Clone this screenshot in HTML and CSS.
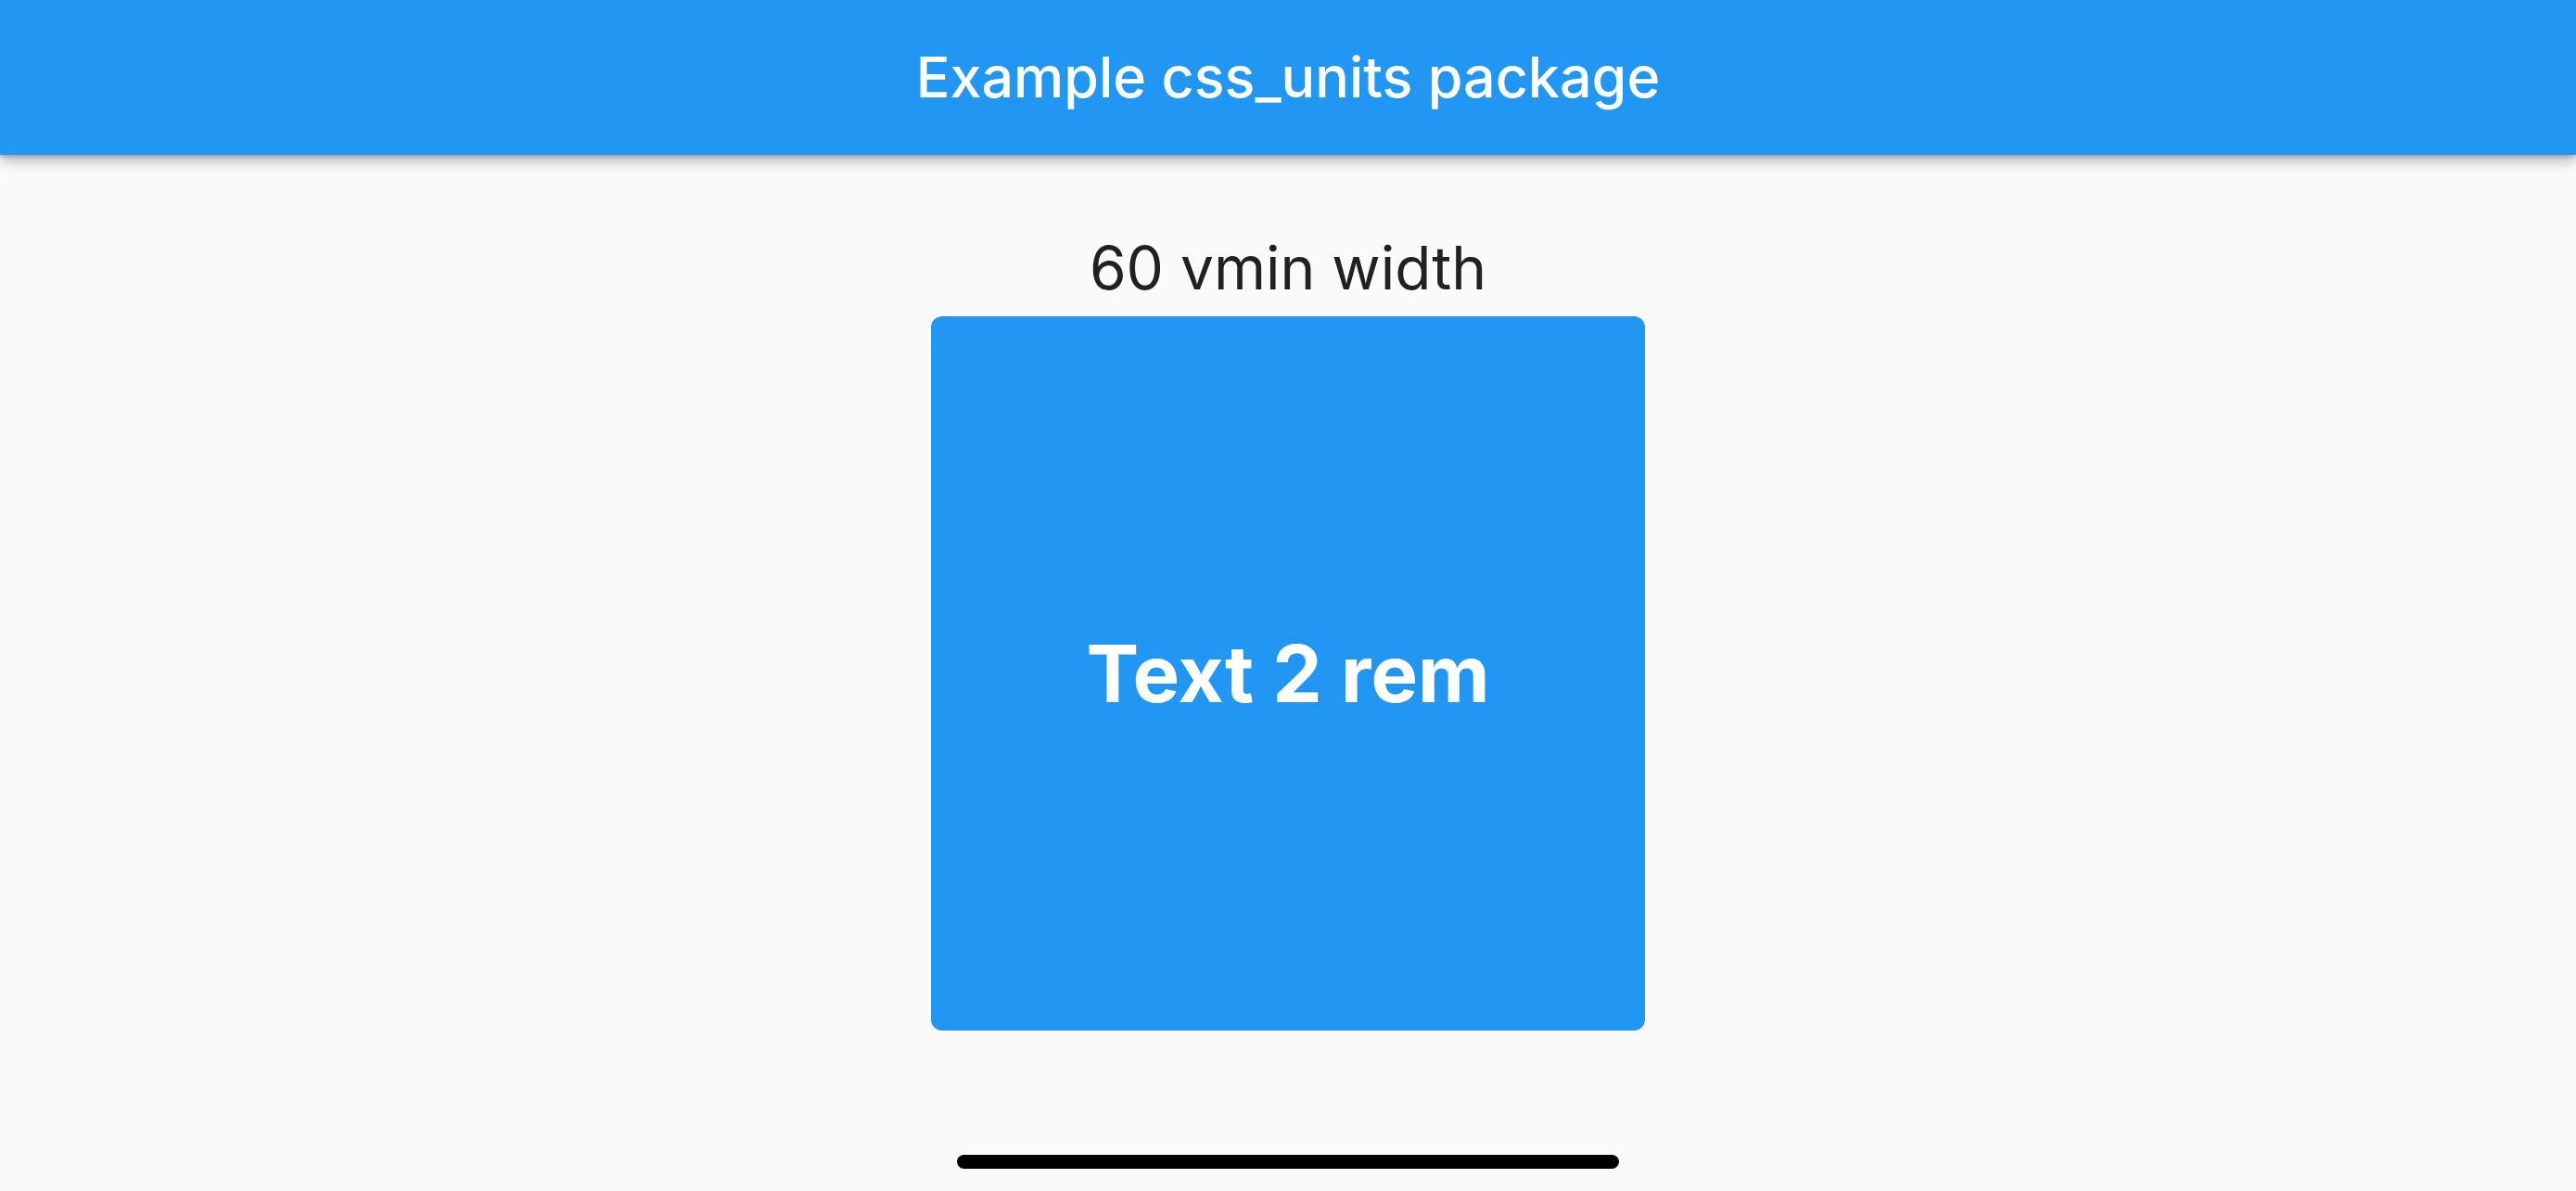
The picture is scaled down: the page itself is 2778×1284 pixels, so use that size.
FILE: index.html
```html
<!DOCTYPE html>
<html>
<head>
<meta charset="utf-8">
<link rel="stylesheet" href="styles.css">
</head>
<body>
<div class="screen">
  <header class="appbar">
    <h1 class="title">Example css_units package</h1>
  </header>
  <main class="content">
    <p class="label">60 vmin width</p>
    <div class="box">
      <span class="box-text">Text 2 rem</span>
    </div>
  </main>
  <div class="home-indicator"></div>
</div>
</body>
</html>
```
FILE: styles.css
```css
html, body {
  margin: 0;
  padding: 0;
  background: #fafafa;
}
.screen {
  position: relative;
  width: 2778px;
  height: 1284px;
  overflow: hidden;
  background: #fafafa;
  display: flex;
  flex-direction: column;
}
.appbar {
  position: relative;
  z-index: 1;
  height: 167px;
  background: #2196f3;
  display: flex;
  align-items: center;
  justify-content: center;
  box-shadow: 0 6px 14px rgba(0, 0, 0, 0.28), 0 2px 4px rgba(0, 0, 0, 0.18);
}
.title {
  margin: 0;
  font-family: Inter, "Noto Sans", sans-serif;
  font-weight: 500;
  font-size: 61px;
  line-height: 61px;
  color: #ffffff;
}
.content {
  display: flex;
  flex-direction: column;
  align-items: center;
  padding-top: 90px;
}
.label {
  margin: 0 0 20px 0;
  font-family: Inter, "Noto Sans", sans-serif;
  font-weight: 400;
  font-size: 64px;
  line-height: 64px;
  color: #212121;
}
.box {
  width: 770px;
  height: 770px;
  background: #2196f3;
  border-radius: 12px;
  display: flex;
  align-items: center;
  justify-content: center;
}
.box-text {
  font-family: Inter, "Noto Sans", sans-serif;
  font-weight: 700;
  font-size: 85px;
  line-height: 85px;
  color: #ffffff;
}
.home-indicator {
  position: absolute;
  left: 50%;
  bottom: 24px;
  width: 714px;
  height: 15px;
  margin-left: -357px;
  background: #000000;
  border-radius: 8px;
}
```
